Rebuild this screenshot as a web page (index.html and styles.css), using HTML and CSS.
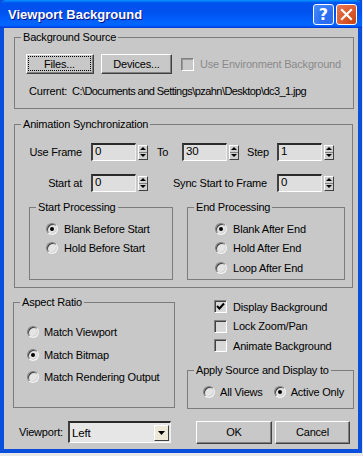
FILE: index.html
```html
<!DOCTYPE html>
<html>
<head>
<meta charset="utf-8">
<link rel="stylesheet" href="styles.css">
</head>
<body>
<div class="window">
  <div class="titlebar">
    <span class="title">Viewport Background</span>
    <span class="tbtns">
      <span class="tb help">?</span>
      <span class="tb close"><svg width="13" height="13" viewBox="0 0 13 13"><path d="M2 2 L11 11 M11 2 L2 11" stroke="#fff" stroke-width="2.2" stroke-linecap="square"/></svg></span>
    </span>
  </div>
  <div class="content">
    <div class="group g-src">
      <span class="legend">Background Source</span>
      <div class="btnrow">
        <span class="btn b-files"><span class="focus">Files...</span></span>
        <span class="btn b-dev">Devices...</span>
        <span class="chk disabled"><span class="box"></span>Use Environment Background</span>
      </div>
      <div class="current"><span class="cur-lbl">Current:</span><span class="path">C:\Documents and Settings\pzahn\Desktop\dc3_1.jpg</span></div>
    </div>

    <div class="group g-anim">
      <span class="legend">Animation Synchronization</span>
      <div class="srow">
        <span class="lbl l-first">Use Frame</span>
        <span class="spin"><span class="field">0</span><span class="arrows"><span class="au"></span><span class="ad"></span></span></span>
        <span class="lbl l-to">To</span>
        <span class="spin"><span class="field">30</span><span class="arrows"><span class="au"></span><span class="ad"></span></span></span>
        <span class="lbl l-step">Step</span>
        <span class="spin"><span class="field">1</span><span class="arrows"><span class="au"></span><span class="ad"></span></span></span>
      </div>
      <div class="srow r2">
        <span class="lbl l-first">Start at</span>
        <span class="spin"><span class="field">0</span><span class="arrows"><span class="au"></span><span class="ad"></span></span></span>
        <span class="lbl l-sync">Sync Start to Frame</span>
        <span class="spin"><span class="field">0</span><span class="arrows"><span class="au"></span><span class="ad"></span></span></span>
      </div>
      <div class="subrow">
        <div class="group g-start">
          <span class="legend">Start Processing</span>
          <div class="radios">
            <span class="radio on"><span class="dot"></span>Blank Before Start</span>
            <span class="radio"><span class="dot"></span>Hold Before Start</span>
          </div>
        </div>
        <div class="group g-end">
          <span class="legend">End Processing</span>
          <div class="radios">
            <span class="radio on"><span class="dot"></span>Blank After End</span>
            <span class="radio"><span class="dot"></span>Hold After End</span>
            <span class="radio"><span class="dot"></span>Loop After End</span>
          </div>
        </div>
      </div>
    </div>

    <div class="lower">
      <div class="group g-aspect">
        <span class="legend">Aspect Ratio</span>
        <div class="radios">
          <span class="radio"><span class="dot"></span>Match Viewport</span>
          <span class="radio on"><span class="dot"></span>Match Bitmap</span>
          <span class="radio"><span class="dot"></span>Match Rendering Output</span>
        </div>
      </div>
      <div class="rcol">
        <div class="checks">
          <span class="chk on"><span class="box"><svg width="9" height="9" viewBox="0 0 9 9"><path d="M1 4 L3.5 6.5 L8 1.5" fill="none" stroke="#000" stroke-width="2"/></svg></span>Display Background</span>
          <span class="chk"><span class="box"></span>Lock Zoom/Pan</span>
          <span class="chk"><span class="box"></span>Animate Background</span>
        </div>
        <div class="group g-apply">
          <span class="legend">Apply Source and Display to</span>
          <div class="hradios">
            <span class="radio"><span class="dot"></span>All Views</span>
            <span class="radio on r-active"><span class="dot"></span>Active Only</span>
          </div>
        </div>
      </div>
    </div>

    <div class="bottom">
      <span class="vp-lbl">Viewport:</span>
      <span class="combo"><span class="combo-text">Left</span><span class="combo-btn"><svg width="7" height="4" viewBox="0 0 7 4"><path d="M0 0 H7 L3.5 4 Z" fill="#000"/></svg></span></span>
      <span class="btn b-ok">OK</span>
      <span class="btn b-cancel">Cancel</span>
    </div>
  </div>
</div>
</body>
</html>
```

FILE: styles.css
```css
html, body {
  margin: 0;
  padding: 0;
  background: #e8e8e8;
}
body {
  width: 363px;
  height: 456px;
  overflow: hidden;
  font-family: "Liberation Sans", Arial, sans-serif;
  font-size: 11px;
  letter-spacing: -0.2px;
  color: #000;
}
.window {
  width: 362px;
  height: 453px;
  box-sizing: border-box;
  background: #0855dd;
  border-left: 4px solid #0a4fdc;
  border-right: 4px solid #0a4fdc;
  border-bottom: 4px solid #0a4fdc;
  box-shadow: inset -1px -1px #00138c;
  display: flex;
  flex-direction: column;
}
.titlebar {
  height: 28px;
  margin: 0 -4px;
  flex: none;
  background: linear-gradient(to bottom, #0997ff 0%, #0053ee 10%, #0050ee 40%, #0066ff 86%, #005bff 94%, #003dd7 97%, #003dd7 100%);
  display: flex;
  align-items: center;
  padding: 0 4px 0 8px;
  border-radius: 6px 6px 0 0;
}
.title {
  color: #fff;
  font-family: "Liberation Sans", Arial, sans-serif;
  font-weight: bold;
  font-size: 13px;
  letter-spacing: 0;
  text-shadow: 1px 1px #0f1089;
  flex: 1;
  padding-top: 1px;
}
.tbtns {
  display: flex;
  gap: 2px;
  margin-right: 1px;
}
.tb {
  width: 21px;
  height: 21px;
  box-sizing: border-box;
  border: 1px solid #fff;
  border-radius: 3px;
  display: flex;
  align-items: center;
  justify-content: center;
  color: #fff;
}
.help {
  background: radial-gradient(circle at 80% 80%, #2a6cf0 0%, #2b6ef5 40%, #4d8ff8 100%);
  font-family: "DejaVu Sans", sans-serif;
  font-weight: bold;
  font-size: 16px;
  letter-spacing: 0;
}
.close {
  background: radial-gradient(circle at 90% 90%, #cc4614 0%, #dc5a2e 50%, #e87a58 100%);
}
.content {
  flex: 1;
  background: #c8c8c8;
  padding-top: 9px;
  display: flex;
  flex-direction: column;
}
.group {
  position: relative;
  box-sizing: border-box;
  border: 1px solid #7c7c7c;
}
.legend {
  position: absolute;
  top: -8px;
  left: 6px;
  padding: 0 2px;
  background: #c8c8c8;
  line-height: 14px;
  white-space: nowrap;
}
.g-src {
  margin-left: 10px;
  width: 340px;
  height: 72px;
  padding: 16px 0 0 11px;
}
.btnrow {
  display: flex;
  align-items: center;
  height: 20px;
}
.btn {
  box-sizing: border-box;
  display: flex;
  align-items: center;
  justify-content: center;
  height: 20px;
  background: #c8c8c8;
  border: 1px solid;
  border-color: #fff #404040 #404040 #fff;
  box-shadow: inset -1px -1px #808080;
  white-space: nowrap;
}
.b-files {
  width: 68px;
  padding: 1px 2px 2px 1px;
  align-items: stretch;
}
.focus {
  flex: 1;
  border: 1px dotted #000;
  display: flex;
  align-items: center;
  justify-content: center;
}
.b-dev { width: 71px; margin-left: 7px; }
.chk {
  display: flex;
  align-items: center;
  white-space: nowrap;
}
.btnrow .chk { margin-left: 9px; }
.box {
  width: 13px;
  height: 13px;
  box-sizing: border-box;
  border: 1px solid;
  border-color: #808080 #fff #fff #808080;
  box-shadow: inset 1px 1px #404040, inset -1px -1px #dcdcdc;
  background: #d8d8d8;
  margin-right: 6px;
  display: flex;
  align-items: center;
  justify-content: center;
  flex: none;
}
.chk.disabled { color: #8a8a8a; }
.chk.disabled .box {
  box-shadow: inset 1px 1px #9a9a9a;
  background: #c8c8c8;
}
.current {
  margin-top: 10px;
  margin-left: 3px;
  line-height: 14px;
  display: flex;
  white-space: nowrap;
}
.cur-lbl { width: 43px; }
.path { letter-spacing: -0.55px; }

.g-anim {
  margin-top: 15px;
  margin-left: 10px;
  width: 339px;
  height: 164px;
  padding-top: 18px;
}
.srow {
  display: flex;
  align-items: center;
  height: 18px;
}
.srow.r2 { margin-top: 13px; }
.lbl { white-space: nowrap; box-sizing: border-box; }
.l-first { width: 76px; text-align: right; padding-right: 9px; }
.l-to { width: 34px; padding-left: 9px; }
.l-step { width: 38px; padding-left: 8px; }
.l-sync { width: 129px; text-align: right; padding-right: 10px; }
.spin {
  display: flex;
  align-items: center;
  width: 57px;
  height: 18px;
}
.field {
  box-sizing: border-box;
  width: 45px;
  height: 18px;
  background: #dedede;
  border-top: 2px solid #2a2a2a;
  border-left: 2px solid #404040;
  border-right: 1px solid #f0f0f0;
  border-bottom: 1px solid #ffffff;
  padding-left: 2px;
  line-height: 13px;
  font-size: 11.5px;
}
.arrows {
  margin-left: 2px;
  width: 10px;
  height: 15px;
  display: flex;
  flex-direction: column;
  box-sizing: border-box;
  border: 1px solid;
  border-color: #fff #404040 #404040 #fff;
  background: #d0d0d0;
}
.au, .ad {
  flex: 1;
  display: flex;
  align-items: center;
  justify-content: center;
}
.au { border-bottom: 1px solid #808080; }
.au::after {
  content: "";
  border-left: 3px solid transparent;
  border-right: 3px solid transparent;
  border-bottom: 3px solid #000;
}
.ad::after {
  content: "";
  border-left: 3px solid transparent;
  border-right: 3px solid transparent;
  border-top: 3px solid #000;
}
.subrow {
  display: flex;
  margin-top: 15px;
  margin-left: 14px;
}
.g-start {
  width: 144px;
  height: 73px;
  padding: 11px 0 0 16px;
}
.g-end {
  width: 158px;
  height: 73px;
  margin-left: 14px;
  padding: 11px 0 0 27px;
}
.radios {
  display: flex;
  flex-direction: column;
}
.radio {
  display: flex;
  align-items: center;
  height: 19.5px;
  white-space: nowrap;
}
.dot {
  width: 12px;
  height: 12px;
  box-sizing: border-box;
  border-radius: 50%;
  border: 1px solid;
  border-color: #808080 #f4f4f4 #f4f4f4 #808080;
  box-shadow: inset 1px 1px #404040, inset -1px -1px #d4d4d4;
  background: #e4e4e4;
  margin-right: 6px;
  flex: none;
  display: flex;
  align-items: center;
  justify-content: center;
}
.radio.on .dot::after {
  content: "";
  width: 4px;
  height: 4px;
  border-radius: 50%;
  background: #000;
}

.lower {
  display: flex;
  margin-top: 9px;
}
.g-aspect {
  margin-top: 5px;
  margin-left: 9px;
  width: 162px;
  height: 106px;
  padding: 18px 0 0 13px;
}
.g-aspect .radio { height: 22.5px; }
.g-aspect .dot { margin-right: 5px; }
.rcol {
  margin-left: 12px;
  width: 167px;
  display: flex;
  flex-direction: column;
}
.checks {
  display: flex;
  flex-direction: column;
  padding-left: 27px;
}
.checks .chk { height: 19.5px; }
.g-apply {
  margin-top: 14px;
  width: 167px;
  height: 39px;
  padding: 13px 0 0 15px;
}
.hradios {
  display: flex;
}
.hradios .radio { height: 16px; }
.hradios .dot { margin-right: 5px; }
.r-active { margin-left: 11px; }

.bottom {
  display: flex;
  align-items: center;
  margin-top: 12px;
  margin-left: 15px;
  height: 23px;
}
.vp-lbl { width: 49px; }
.combo {
  box-sizing: border-box;
  width: 103px;
  height: 22px;
  display: flex;
  align-items: center;
  background: #e6e6e6;
  border-top: 2px solid #2a2a2a;
  border-left: 2px solid #404040;
  border-right: 1px solid #f0f0f0;
  border-bottom: 1px solid #fff;
  font-size: 11.5px;
}
.combo-text { flex: 1; padding-left: 2px; }
.combo-btn {
  box-sizing: border-box;
  width: 15px;
  height: 16px;
  margin-right: 1px;
  background: #ece9d8;
  border: 1px solid;
  border-color: #fff #404040 #404040 #fff;
  display: flex;
  align-items: center;
  justify-content: center;
}
.b-ok { width: 76px; height: 23px; margin-left: 25px; }
.b-cancel { width: 75px; height: 23px; margin-left: 3px; }
```
